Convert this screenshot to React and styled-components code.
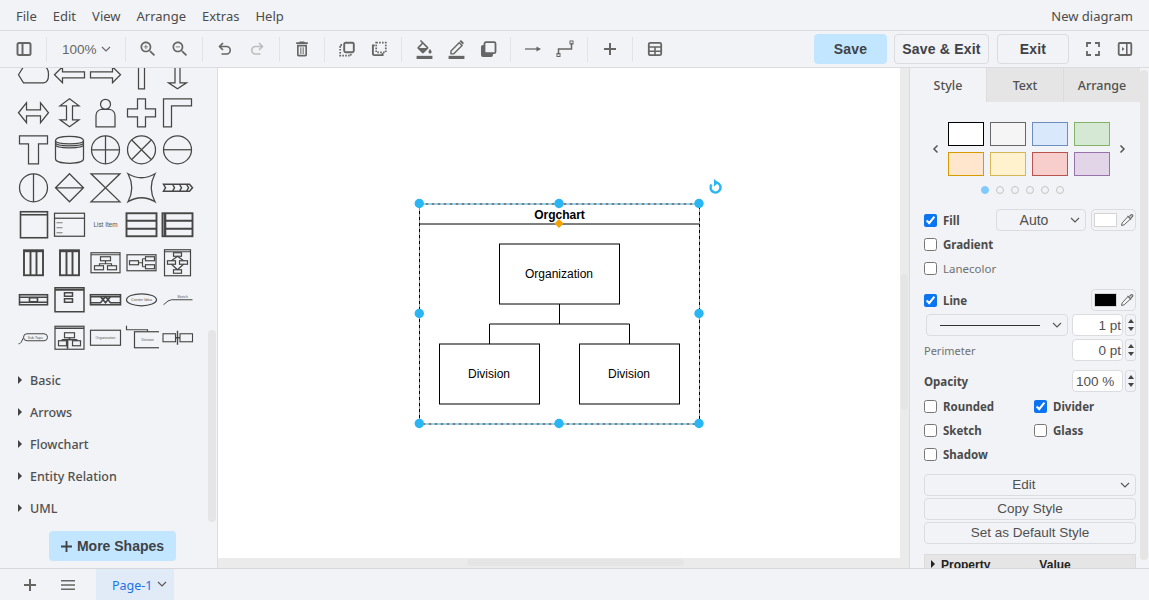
import React from "react";
import styled, { createGlobalStyle } from "styled-components";

const Global = createGlobalStyle`
  html, body { margin: 0; padding: 0; height: 100%; overflow: hidden; background: #f1f3f6; }
  * { box-sizing: border-box; }
`;
const UI = `"Noto Sans", "Open Sans", sans-serif`;
const ARIAL = `"Liberation Sans", Arial, sans-serif`;

const Page = styled.div`
  width: 1149px; height: 600px; display: flex; flex-direction: column; overflow: hidden;
  background: #f1f3f6; color: #4b4b4b; font-family: ${UI};
`;
const MenuBar = styled.div`
  height: 31px; flex: none; display: flex; align-items: center; justify-content: space-between;
  padding: 1px 16px 0; border-bottom: 1px solid #dadce0; font-size: 13px;
`;
const Menus = styled.div`display: flex; gap: 16px;`;
const Toolbar = styled.div`
  height: 37px; flex: none; display: flex; align-items: center; padding-left: 8px; border-bottom: 1px solid #dadce0;
`;
const ToolBtn = styled.div`
  width: 32px; height: 30px; flex: none; display: flex; align-items: center; justify-content: center;
  margin-left: ${p => p.$ml || 0}px; margin-right: ${p => p.$mr || 0}px;
  color: ${p => (p.$off ? "#bdbdbd" : "#666")};
`;
const Sep = styled.div`width: 1px; height: 25px; margin: 0 6px; background: #e1e3e6; flex: none;`;
const Zoom = styled.div`
  width: 66px; flex: none; display: flex; align-items: center; gap: 4px; padding-left: 9px;
  font: 13.5px ${ARIAL}; color: #666;
`;
const Spacer = styled.div`flex: 1;`;
const ActionBtn = styled.div`
  height: 30px; width: ${p => p.$w}px; margin-left: ${p => p.$ml || 0}px; flex: none; border-radius: 4px;
  display: flex; align-items: center; justify-content: center;
  font: bold 14px ${ARIAL}; letter-spacing: .2px; color: #3f4246;
  background: ${p => (p.$primary ? "#c2e6ff" : "transparent")};
  border: 1px solid ${p => (p.$primary ? "#c2e6ff" : "#dadce0")};
`;
const Body = styled.div`height: 500px; flex: none; display: flex;`;
const Sidebar = styled.aside`
  position: relative; width: 218px; flex: none; overflow: hidden; border-right: 1px solid #dcdcdc;
`;
const Palette = styled.div`
  display: grid; grid-template-columns: repeat(5, 36px); grid-auto-rows: 37.5px;
  margin-top: -12px; padding-left: 15px;
`;
const Thumb = styled.svg`
  display: block; width: 36px; height: 37.5px; fill: none; stroke: #464646; stroke-width: 1.25;
  text { stroke: none; fill: #555; font-family: ${ARIAL}; text-anchor: middle; }
`;
const Sections = styled.div`margin-top: 8px;`;
const Section = styled.div`
  height: 32px; display: flex; align-items: center; padding-left: 18px; gap: 8px;
  font-size: 12.5px; font-weight: 500; color: #505050;
`;
const Caret = styled.span`
  width: 0; height: 0; flex: none; border-left: 4px solid #444;
  border-top: 4px solid transparent; border-bottom: 4px solid transparent;
`;
const MoreShapes = styled.div`
  width: 127px; height: 30px; margin: 7px 0 0 49px; border-radius: 4px; background: #c2e6ff;
  display: flex; align-items: center; justify-content: center; gap: 5px;
  font: bold 14px ${ARIAL}; color: #3f4246;
`;
const ScrollThumb = styled.div`
  position: absolute; border-radius: 4px; background: #e5e5e5;
  left: ${p => p.$l}px; top: ${p => p.$t}px; width: ${p => p.$w}px; height: ${p => p.$h}px;
`;
const Workspace = styled.main`
  position: relative; flex: none; width: 692px; display: flex; flex-direction: column; background: #ebebeb;
  border-right: 1px solid #dcdcdc;
`;
const Canvas = styled.div`width: 682px; height: 490px; background: #fff; flex: none;`;
const Diagram = styled.svg`
  display: block; width: 682px; height: 490px;
  text { font-family: ${ARIAL}; font-size: 12px; text-anchor: middle; fill: #000; }
`;
const Panel = styled.aside`
  position: relative; width: 239px; flex: none; overflow: hidden;
`;
const Tabs = styled.div`display: flex; width: 230px; height: 34px;`;
const Tab = styled.div`
  flex: 1; display: flex; align-items: center; justify-content: center; font-size: 12.5px; font-weight: 500;
  color: #505050; background: ${p => (p.$active ? "#f1f3f6" : "#e5e5e5")};
  border-left: ${p => (p.$active ? "none" : "1px solid #dcdcdc")};
`;
const Content = styled.div`padding: 0 13px 0 14px;`;
const SwatchArea = styled.div`
  margin: 20px 0 0 -1px; width: 212px; display: flex; align-items: center; justify-content: space-between; padding: 0 9px;
`;
const Swatches = styled.div`display: grid; grid-template-columns: repeat(4, 36px); gap: 6px;`;
const Swatch = styled.div`height: 24px; background: ${p => p.$bg}; border: 1px solid ${p => p.$bd};`;
const Dots = styled.div`display: flex; gap: 7px; margin: 10px 0 0 57px;`;
const Dot = styled.div`
  width: 8px; height: 8px; border-radius: 50%;
  background: ${p => (p.$on ? "#7fcbff" : "transparent")};
  border: 1px solid ${p => (p.$on ? "#7fcbff" : "#c4c4c4")};
`;
const Row = styled.div`
  height: 22px; margin-top: ${p => p.$mt || 0}px; display: flex; align-items: center; justify-content: space-between;
`;
const Check = styled.label`
  height: 24px; display: flex; align-items: center; gap: 6px; font-size: 11.5px;
  margin-top: ${p => p.$mt || 0}px; color: ${p => (p.$light ? "#707070" : "#4b4b4b")};
  font-weight: ${p => (p.$light ? 400 : 700)};
  input { margin: 0; width: 13px; height: 13px; accent-color: #0b74f1; flex: none; }
`;
const FieldLabel = styled.span`
  font-size: ${p => (p.$light ? 11 : 11.5)}px; color: ${p => (p.$light ? "#707070" : "#4b4b4b")}; font-weight: ${p => (p.$light ? 400 : 700)};
`;
const Select = styled.div`
  height: 22px; width: ${p => p.$w}px; margin-left: ${p => p.$ml}; border: 1px solid #dadce0; border-radius: 4px;
  display: flex; align-items: center; justify-content: ${p => (p.$line ? "flex-start" : "center")}; position: relative;
  font: 14px ${ARIAL}; color: #505050; padding-left: ${p => (p.$line ? 13 : 0)}px; padding-right: ${p => (p.$line ? 0 : 14)}px;
`;
const SelectChevron = styled.span`position: absolute; right: 5px; top: 5px; display: flex; color: #555;`;
const LineSample = styled.div`width: 100px; height: 1px; background: #333;`;
const ColorBtn = styled.div`
  width: 45px; height: 22px; margin-left: ${p => p.$ml || 0}px; flex: none; border: 1px solid #dadce0; border-radius: 4px;
  display: flex; align-items: center; gap: 3px; padding-left: 2px; color: #666;
`;
const ColorChip = styled.div`width: 23px; height: 14px; background: ${p => p.$c}; border: 1px solid #d5d5d5;`;
const Stepper = styled.div`display: flex; gap: 2px; margin-left: auto;`;
const NumInput = styled.div`
  width: 51px; height: 22px; background: #fff; border: 1px solid #dadce0; border-radius: 4px; display: flex; align-items: center;
  justify-content: ${p => (p.$left ? "flex-start" : "flex-end")}; padding: 0 1px 0 3px; font: 13.5px ${ARIAL}; color: #505050;
`;
const Spin = styled.div`
  width: 11px; height: 22px; border: 1px solid #dadce0; border-radius: 3px; background: #f1f3f6; display: flex; flex-direction: column;
  align-items: center; justify-content: center; gap: 4px;
`;
const SpinUp = styled.span`width: 0; height: 0; border-left: 3.5px solid transparent; border-right: 3.5px solid transparent; border-bottom: 4px solid #444;`;
const SpinDown = styled.span`width: 0; height: 0; border-left: 3.5px solid transparent; border-right: 3.5px solid transparent; border-top: 4px solid #444;`;
const CheckGrid = styled.div`display: grid; grid-template-columns: 110px 1fr; margin-top: 2px;`;
const Buttons = styled.div`display: flex; flex-direction: column; gap: 2px; margin-top: 8px; width: 212px;`;
const PanelBtn = styled.div`
  position: relative; height: 22px; border: 1px solid #dadce0; border-radius: 4px; display: flex; align-items: center; justify-content: center;
  font: 13.5px/20px ${ARIAL}; color: #505050; padding: 0 ${p => p.$pr || 0}px 1px 0;
`;
const PropHeader = styled.div`
  margin-top: 10px; width: 212px; height: 24px; background: #e5e5e5; border: 1px solid #dcdcdc; display: flex; align-items: flex-start; padding: 3px 0 0 6px; gap: 6px;
  font: bold 12px ${ARIAL}; color: #222;
`;
const PropValue = styled.span`margin-left: 43px;`;
const PropCaret = styled.span`
  margin-top: 2px; width: 0; height: 0; flex: none; border-left: 4px solid #222; border-top: 4px solid transparent; border-bottom: 4px solid transparent;
`;
const Footer = styled.footer`
  height: 32px; flex: none; border-top: 1px solid #d5d7da; display: flex; align-items: stretch; padding-left: 14px; color: #666;
`;
const FootBtn = styled.div`
  width: 32px; margin-left: ${p => p.$ml || 0}px; margin-right: ${p => p.$mr || 0}px; display: flex; align-items: center; justify-content: center;
`;
const PageTab = styled.div`
  width: 78px; background: #e1ebf7; color: #1a73e8; font-size: 12.5px; display: flex; align-items: center; padding: 1px 0 0 16px; gap: 4px;
`;
const ChevronRaised = styled.span`display: flex; margin-top: -2px; color: #555;`;

const Chevron = ({ s = 10 }) => (
  <svg width={s} height={s} viewBox="0 0 10 10" fill="none" stroke="currentColor" strokeWidth="1.1"><path d="M1 3l4 4 4-4" /></svg>
);
const Ico = ({ children, s = 24, vb = "0 0 24 24", fill = "currentColor" }) => (
  <svg width={s} height={s} viewBox={vb} fill={fill}>{children}</svg>
);
const ZOOM = "M15.5 14h-.79l-.28-.27C15.41 12.59 16 11.11 16 9.5 16 5.91 13.09 3 9.5 3S3 5.91 3 9.5 5.91 16 9.5 16c1.61 0 3.09-.59 4.23-1.57l.27.28v.79l5 4.99L20.49 19l-4.99-5zm-6 0C7.01 14 5 11.99 5 9.5S7.01 5 9.5 5 14 7.01 14 9.5 11.99 14 9.5 14z";
const Stroke = { fill: "none", stroke: "currentColor" };

const Sidebars = () => <Ico s={16} vb="0 0 16 16" fill="none"><rect x="1.5" y="2" width="13" height="12" rx="1.5" stroke="currentColor" strokeWidth="2" /><path d="M6.5 2v12" stroke="currentColor" strokeWidth="2" /></Ico>;
const ZoomIn = () => <Ico s={20}><path d={ZOOM} /><path d="M12 10h-2v2H9v-2H7V9h2V7h1v2h2z" /></Ico>;
const ZoomOut = () => <Ico s={20}><path d={ZOOM} /><path d="M7 9h5v1H7z" /></Ico>;
const Undo = () => <Ico s={16} vb="0 0 16 16" fill="none"><path d="M6 2L2.5 5.5 6 9M3 5.5h6.5a3.7 3.7 0 010 7.5H4.5" stroke="currentColor" strokeWidth="1.6" /></Ico>;
const Redo = () => <Ico s={16} vb="0 0 16 16" fill="none"><path d="M10 2l3.5 3.5L10 9M13 5.5H6.5a3.7 3.7 0 000 7.5h5" stroke="currentColor" strokeWidth="1.6" /></Ico>;
const Trash = () => <Ico s={20}><path d="M6 19c0 1.1.9 2 2 2h8c1.1 0 2-.9 2-2V7H6v12zM8 9h8v10H8V9zm7.5-5l-1-1h-5l-1 1H5v2h14V4z" /><path d="M10 10h1.2v8H10zM12.8 10H14v8h-1.2z" /></Ico>;
const ToFront = () => <Ico s={16} vb="0 0 16 16" fill="none"><rect x="5.2" y="1.7" width="9.6" height="9.6" rx="1.5" stroke="currentColor" strokeWidth="1.9" /><path d="M3 4H1.2v10.6h10.6V13" stroke="currentColor" strokeWidth="1.8" strokeDasharray="1.6 1.3" /></Ico>;
const ToBack = () => <Ico s={16} vb="0 0 16 16" fill="none"><path d="M3.8 4.4H1.9v8.4a1.3 1.3 0 001.3 1.3h8.4v-2" stroke="currentColor" strokeWidth="1.9" /><rect x="5.2" y="1.7" width="9.6" height="9.6" stroke="currentColor" strokeWidth="1.7" strokeDasharray="1.6 1.3" /></Ico>;
const FillIco = () => <Ico s={19}><path d="M16.56 8.94L7.62 0 6.21 1.41l2.38 2.38-5.15 5.15c-.59.59-.59 1.54 0 2.12l5.5 5.5c.29.29.68.44 1.06.44s.77-.15 1.06-.44l5.5-5.5c.59-.58.59-1.53 0-2.11zM5.21 10L10 5.21 14.79 10H5.21zM19 11.5s-2 2.17-2 3.5c0 1.1.9 2 2 2s2-.9 2-2c0-1.33-2-3.5-2-3.5z" /><path d="M2 20h20v4H2z" /></Ico>;
const LineIco = () => <Ico s={19}><path d="M2 20h20v4H2z" /><path d="M5 17.5v-3.6L15.4 3.5l3.6 3.6L8.6 17.5z" {...Stroke} strokeWidth="1.8" /><path d="M15.8 1.5l1-.8a1.3 1.3 0 011.7 0l2.3 2.3a1.3 1.3 0 010 1.7l-1 1z" /></Ico>;
const ShadowIco = () => <Ico s={17} vb="0 0 17 17" fill="none"><rect x="1" y="4" width="12" height="12" rx="2" fill="currentColor" /><rect x="4.5" y="1.2" width="11" height="11" rx="1.5" fill="#f1f3f6" stroke="currentColor" strokeWidth="1.8" /></Ico>;
const ArrowIco = () => <Ico s={16} vb="0 0 16 16"><path d="M0 8h13" stroke="currentColor" strokeWidth="1.3" /><path d="M11.5 5.5L16 8l-4.5 2.5z" /></Ico>;
const WaypointIco = () => <Ico s={18} vb="0 0 18 18" fill="none"><path d="M2.5 14.5V9h13V3" stroke="currentColor" strokeWidth="1.5" /><rect x="1" y="13.5" width="3" height="3" stroke="currentColor" /><rect x="14" y="1" width="3" height="3" stroke="currentColor" /></Ico>;
const Plus = ({ s = 12 }) => <Ico s={s} vb="0 0 12 12"><path d="M5 0h2v5h5v2H7v5H5V7H0V5h5z" /></Ico>;
const TableIco = () => <Ico s={16} vb="0 0 16 16" fill="none"><rect x="1.8" y="1.8" width="12.4" height="12.4" rx="1.5" stroke="currentColor" strokeWidth="1.8" /><path d="M2 6h12M2 10.2h12M8 6v8" stroke="currentColor" strokeWidth="1.6" /></Ico>;
const Fullscreen = () => <Ico s={16} vb="0 0 16 16" fill="none"><path d="M2 6V2h4M10 2h4v4M14 10v4h-4M6 14H2v-4" stroke="currentColor" strokeWidth="1.8" /></Ico>;
const RightPanel = () => <Ico s={16} vb="0 0 16 16" fill="none"><rect x="1.7" y="2" width="12.6" height="12" rx="1.2" stroke="currentColor" strokeWidth="1.8" /><path d="M9.8 2v12" stroke="currentColor" strokeWidth="1.6" /><path d="M5 6l2.5 2L5 10z" fill="currentColor" /></Ico>;
const Dropper = () => <Ico s={14} vb="0 0 14 14" fill="none"><path d="M8 3.5L2.2 9.8 1.5 12.5l2.7-.7L10.5 6" stroke="currentColor" strokeWidth="1" /><path d="M7.5 2.8l3.7 3.7M9.5 3.5l1.7-1.8a1.1 1.1 0 011.5 1.5L11 5" stroke="currentColor" strokeWidth="1.2" /></Ico>;
const Arrowhead = ({ d }) => <svg width="7" height="10" viewBox="0 0 7 10" fill="none" stroke="#555" strokeWidth="1.5"><path d={d} /></svg>;
const Hamburger = () => <Ico s={16} vb="0 0 16 16"><path d="M1 3h14v1.5H1zM1 7.2h14v1.5H1zM1 11.5h14V13H1z" /></Ico>;

const Circled = ({ d }) => <><circle r="14" /><path d={d} /></>;
const tinyBoxes = (list) => list.map((r, i) => <rect key={i} x={r[0]} y={r[1]} width={r[2]} height={r[3]} />);

const shapes = [
  <path d="M-15 0L-10-8H10Q15-8 15 0Q15 8 10 8H-10Z" />,
  <path d="M-15 0L-7-8V-3H15V3H-7V8Z" />,
  <path d="M15 0L7-8V-3H-15V3H7V8Z" />,
  <path d="M-3 14H3V-14H-3Z" />,
  <path d="M-2.5-14V8H-9L0 14L9 8H2.5V-14Z" />,
  <path d="M-15 0L-7-10V-3H7V-10L15 0L7 10V3H-7V10Z" />,
  <path d="M0-14L9.5-7H3V7H9.5L0 14L-9.5 7H-3V-7H-9.5Z" />,
  <><circle cy="-8.5" r="5" /><path d="M-9.5 14V3C-9.5-1-6-3-4-3.5H4C6-3 9.5-1 9.5 3V14Z" /></>,
  <path d="M-4-14H4V-4H14V4H4V14H-4V4H-14V-4H-4Z" />,
  <path d="M-14-14H14V-7H-6V14H-14Z" />,
  <path d="M-14-14H14V-6H5V14H-5V-6H-14Z" />,
  <path d="M-14-9C-14-15 14-15 14-9V9C14 15-14 15-14 9ZM-14-9C-14-5 14-5 14-9M-14-7C-14-3 14-3 14-7M-14-5C-14-1 14-1 14-5" />,
  <Circled d="M0-14V14M-14 0H14" />,
  <Circled d="M-10-10L10 10M10-10L-10 10" />,
  <Circled d="M-14 0H14" />,
  <Circled d="M0-14V14" />,
  <path d="M0-14L14 0L0 14L-14 0ZM-14 0H14" />,
  <path d="M-14.5-14H14.5L-14.5 14H14.5Z" />,
  <path d="M-13.5-14Q0-6 13.5-14Q6 0 13.5 14Q0 6-13.5 14Q-6 0-13.5-14Z" />,
  <path strokeWidth="1.5" d="M-14-3.5H12L15 0L12 3.5H-14L-12 0ZM-5-3.5L-3 0L-5 3.5M2-3.5L4 0L2 3.5M9-3.5L11 0L9 3.5" />,
  <g strokeWidth="1.6"><rect x="-13" y="-13" width="27" height="26" /><path d="M-13-10H14" /></g>,
  <><rect x="-15" y="-11.5" width="30" height="23" /><path d="M-15-6.5H15" /><path d="M-13-2H-7M-13 3H-7M-13 8H-7" strokeWidth=".7" /></>,
  <text y="2.5" fontSize="6.4">List Item</text>,
  <g strokeWidth="1.9"><rect x="-15" y="-11.5" width="30" height="23" /><path d="M-15-4H15M-15 4H15" /></g>,
  <g strokeWidth="1.9"><rect x="-15" y="-11.5" width="30" height="23" /><path d="M-12.5-11.5V11.5" strokeWidth="2.6" /><path d="M-12-4H15M-12 4H15" /></g>,
  <g strokeWidth="1.9"><rect x="-9.5" y="-12.5" width="19" height="25" /><path d="M-3-12V12.5M3-12V12.5" /><path d="M-9.5-11.5H9.5" /></g>,
  <g strokeWidth="1.9"><rect x="-9.5" y="-12.5" width="19" height="25" /><path d="M-3-12V12.5M3-12V12.5" /><path d="M-9.5-11.5H9.5" /></g>,
  <g strokeWidth="1.2">{tinyBoxes([[-14.5, -10, 29, 20], [-5, -6, 10, 4], [-11, 3, 9, 4], [2, 3, 9, 4]])}<path d="M-14.5-8H14.5M0-2V1M-6 3V1H6V3" /></g>,
  <g strokeWidth="1.2">{tinyBoxes([[-14.5, -8, 29, 16], [-12, -2, 9, 4], [4, -6, 9, 4], [4, 2, 9, 4]])}<path d="M-3 0H1M1-4V4M1-4H4M1 4H4" /></g>,
  <g strokeWidth="1.2">{tinyBoxes([[-13, -13, 26, 26], [-4, -10, 8, 3.5], [-10, -2, 8, 3.5], [2, -2, 8, 3.5], [-4, 7, 8, 3.5]])}<path d="M-13-11H13M0-6.5L-6-2M0-6.5L6-2M-6 1.5L0 7M6 1.5L0 7" /></g>,
  <g strokeWidth="1.6">{tinyBoxes([[-14, -5, 28, 10], [-4, -2, 8, 4]])}<path d="M-14-2.5H14M-14 2.5H14" /></g>,
  <g strokeWidth="1.5">{tinyBoxes([[-14.5, -12, 29, 24], [-5, -7, 8, 3.5], [-5, -1, 8, 3.5]])}<path d="M-14.5-10H14.5" strokeWidth="2" /></g>,
  <g strokeWidth="1.6">{tinyBoxes([[-15, -5, 30, 10]])}<path d="M-15-3H15M-15 3H-5L0-3L5 3H15M-5-3L0 3L5-3" /></g>,
  <g><ellipse rx="15" ry="6" /><text y="1.5" fontSize="4">Center Idea</text></g>,
  <g strokeWidth="1"><path d="M-14 5Q-9 0-6 0H15" /><text x="5" y="-2" fontSize="3.5">Sketch</text></g>,
  <g strokeWidth="1"><rect x="-10" y="-4" width="24" height="7" rx="3.5" /><path d="M-10 0C-12 3-12 6-15 6" /><text x="2" y="1" fontSize="3.5">Sub Topic</text></g>,
  <g strokeWidth="1.2">{tinyBoxes([[-14.5, -11.5, 29, 23], [-5, -5, 10, 5], [-11, 3, 8, 5], [3, 3, 8, 5]])}<path d="M-14.5-9.5H14.5M0 0V2M-7 3V2H7V3M-2 2V11" strokeWidth="1.7" /></g>,
  <g strokeWidth="1.2"><rect x="-15" y="-7.5" width="30" height="15" /><text y="1" fontSize="3.5">Organization</text></g>,
  <g strokeWidth="1.2"><rect x="-7" y="-6" width="26" height="16" /><path d="M-15-12V-8H6V-6" /><text x="6" y="3" fontSize="3.5">Division</text></g>,
  <g strokeWidth="1.1">{tinyBoxes([[-14.5, -4, 12.5, 8], [2.5, -4, 12.5, 8]])}<path d="M-2 0H2.5M0-7V7" strokeWidth="1.4" /></g>,
];

const swatches = [
  ["#ffffff", "#000000"], ["#f5f5f5", "#666666"], ["#dae8fc", "#6c8ebf"], ["#d5e8d4", "#82b366"],
  ["#ffe6cc", "#d79b00"], ["#fff2cc", "#d6b656"], ["#f8cecc", "#b85450"], ["#e1d5e7", "#9673a6"],
];

const handles = [[419.3, 203.5], [559, 203.5], [699, 203.5], [419.3, 313.5], [699, 313.5], [419.3, 423.5], [559, 423.5], [699, 423.5]];

const CheckBox = ({ label, checked, light, mt }) => (
  <Check $light={light} $mt={mt}><input type="checkbox" defaultChecked={checked} />{label}</Check>
);
const Spinner = () => <Spin><SpinUp /><SpinDown /></Spin>;

export default function App() {
  return (
    <Page>
      <Global />
      <MenuBar>
        <Menus>{["File", "Edit", "View", "Arrange", "Extras", "Help"].map(m => <span key={m}>{m}</span>)}</Menus>
        <span>New diagram</span>
      </MenuBar>
      <Toolbar>
        <ToolBtn><Sidebars /></ToolBtn><Sep />
        <Zoom>100%<Chevron /></Zoom><Sep />
        <ToolBtn><ZoomIn /></ToolBtn><ToolBtn><ZoomOut /></ToolBtn><Sep />
        <ToolBtn><Undo /></ToolBtn><ToolBtn $off><Redo /></ToolBtn><Sep />
        <ToolBtn><Trash /></ToolBtn><Sep />
        <ToolBtn><ToFront /></ToolBtn><ToolBtn><ToBack /></ToolBtn><Sep />
        <ToolBtn><FillIco /></ToolBtn><ToolBtn><LineIco /></ToolBtn><ToolBtn><ShadowIco /></ToolBtn><Sep />
        <ToolBtn><ArrowIco /></ToolBtn><ToolBtn><WaypointIco /></ToolBtn><Sep />
        <ToolBtn><Plus /></ToolBtn><Sep />
        <ToolBtn><TableIco /></ToolBtn>
        <Spacer />
        <ActionBtn $primary $w={73}>Save</ActionBtn>
        <ActionBtn $w={95} $ml={7}>Save &amp; Exit</ActionBtn>
        <ActionBtn $w={72} $ml={8}>Exit</ActionBtn>
        <ToolBtn $ml={8}><Fullscreen /></ToolBtn>
        <ToolBtn $mr={8}><RightPanel /></ToolBtn>
      </Toolbar>
      <Body>
        <Sidebar>
          <Palette>
            {shapes.map((s, i) => <Thumb key={i} viewBox="-18.5 -18.75 36 37.5">{s}</Thumb>)}
          </Palette>
          <Sections>
            {["Basic", "Arrows", "Flowchart", "Entity Relation", "UML"].map(t => <Section key={t}><Caret />{t}</Section>)}
          </Sections>
          <MoreShapes><Plus s={11} />More Shapes</MoreShapes>
          <ScrollThumb $l={208} $t={262} $w={8} $h={192} />
        </Sidebar>
        <Workspace>
          <Canvas>
            <Diagram viewBox="218 68 682 490">
              <g fill="#fff" stroke="#000">
                <path d="M419.5 224H699.5" />
                <rect x="499.5" y="244" width="120" height="60" />
                <rect x="439.5" y="344" width="100" height="60" />
                <rect x="579.5" y="344" width="100" height="60" />
                <path d="M559.5 304V324M489.5 344V324H629.5V344" fill="none" />
              </g>
              <text x="559.5" y="218.5" fontWeight="700">Orgchart</text>
              <text x="559" y="278">Organization</text>
              <text x="489" y="378">Division</text>
              <text x="629" y="378">Division</text>
              <rect x="419.5" y="204" width="280" height="220" fill="none" stroke="#000" strokeDasharray="3 3" />
              <rect x="419.5" y="204" width="280" height="220" fill="none" stroke="#29b6f2" strokeDasharray="3 3" strokeDashoffset="3" />
              {handles.map(([x, y]) => <circle key={`${x}-${y}`} cx={x} cy={y} r="4.7" fill="#29b6f2" />)}
              <path d="M559 219L563.5 223.5L559 228L554.5 223.5Z" fill="#f5a100" />
              <path d="M711.5 184.5A5 5 0 1 0 715 182.5" fill="none" stroke="#29b6f2" strokeWidth="2.4" />
              <path d="M714 179L718.5 182.8L714 186.5Z" fill="#29b6f2" />
            </Diagram>
          </Canvas>
          <ScrollThumb $l={249} $t={491} $w={217} $h={7} />
          <ScrollThumb $l={683} $t={206} $w={7} $h={136} />
        </Workspace>
        <Panel>
          <Tabs>
            <Tab $active>Style</Tab><Tab>Text</Tab><Tab>Arrange</Tab>
          </Tabs>
          <Content>
            <SwatchArea>
              <Arrowhead d="M5.5 1.5L2 5l3.5 3.5" />
              <Swatches>{swatches.map(([b, c]) => <Swatch key={b} $bg={b} $bd={c} />)}</Swatches>
              <Arrowhead d="M1.5 1.5L5 5 1.5 8.5" />
            </SwatchArea>
            <Dots>{[0, 1, 2, 3, 4, 5].map(i => <Dot key={i} $on={i === 0} />)}</Dots>
            <Row $mt={15}>
              <CheckBox label="Fill" checked />
              <Select $w={90} $ml="auto">Auto<SelectChevron><Chevron /></SelectChevron></Select>
              <ColorBtn $ml={5}><ColorChip $c="#fff" /><Dropper /></ColorBtn>
            </Row>
            <CheckBox label="Gradient" mt={1} />
            <CheckBox label="Lanecolor" light />
            <Row $mt={9}>
              <CheckBox label="Line" checked />
              <ColorBtn><ColorChip $c="#000" /><Dropper /></ColorBtn>
            </Row>
            <Row $mt={3}>
              <Select $w={142} $ml="2px" $line><LineSample /><SelectChevron><Chevron /></SelectChevron></Select>
              <Stepper><NumInput>1 pt</NumInput><Spinner /></Stepper>
            </Row>
            <Row $mt={3}>
              <FieldLabel $light>Perimeter</FieldLabel>
              <Stepper><NumInput>0 pt</NumInput><Spinner /></Stepper>
            </Row>
            <Row $mt={9}>
              <FieldLabel>Opacity</FieldLabel>
              <Stepper><NumInput $left>100 %</NumInput><Spinner /></Stepper>
            </Row>
            <CheckGrid>
              <CheckBox label="Rounded" /><CheckBox label="Divider" checked />
              <CheckBox label="Sketch" /><CheckBox label="Glass" />
              <CheckBox label="Shadow" />
            </CheckGrid>
            <Buttons>
              <PanelBtn $pr={12}>Edit<SelectChevron><Chevron /></SelectChevron></PanelBtn>
              <PanelBtn>Copy Style</PanelBtn>
              <PanelBtn>Set as Default Style</PanelBtn>
            </Buttons>
            <PropHeader><PropCaret />Property<PropValue>Value</PropValue></PropHeader>
          </Content>
          <ScrollThumb $l={230} $t={2} $w={8} $h={490} />
        </Panel>
      </Body>
      <Footer>
        <FootBtn><Plus /></FootBtn>
        <FootBtn $ml={6} $mr={12}><Hamburger /></FootBtn>
        <PageTab>Page-1<ChevronRaised><Chevron /></ChevronRaised></PageTab>
      </Footer>
    </Page>
  );
}
